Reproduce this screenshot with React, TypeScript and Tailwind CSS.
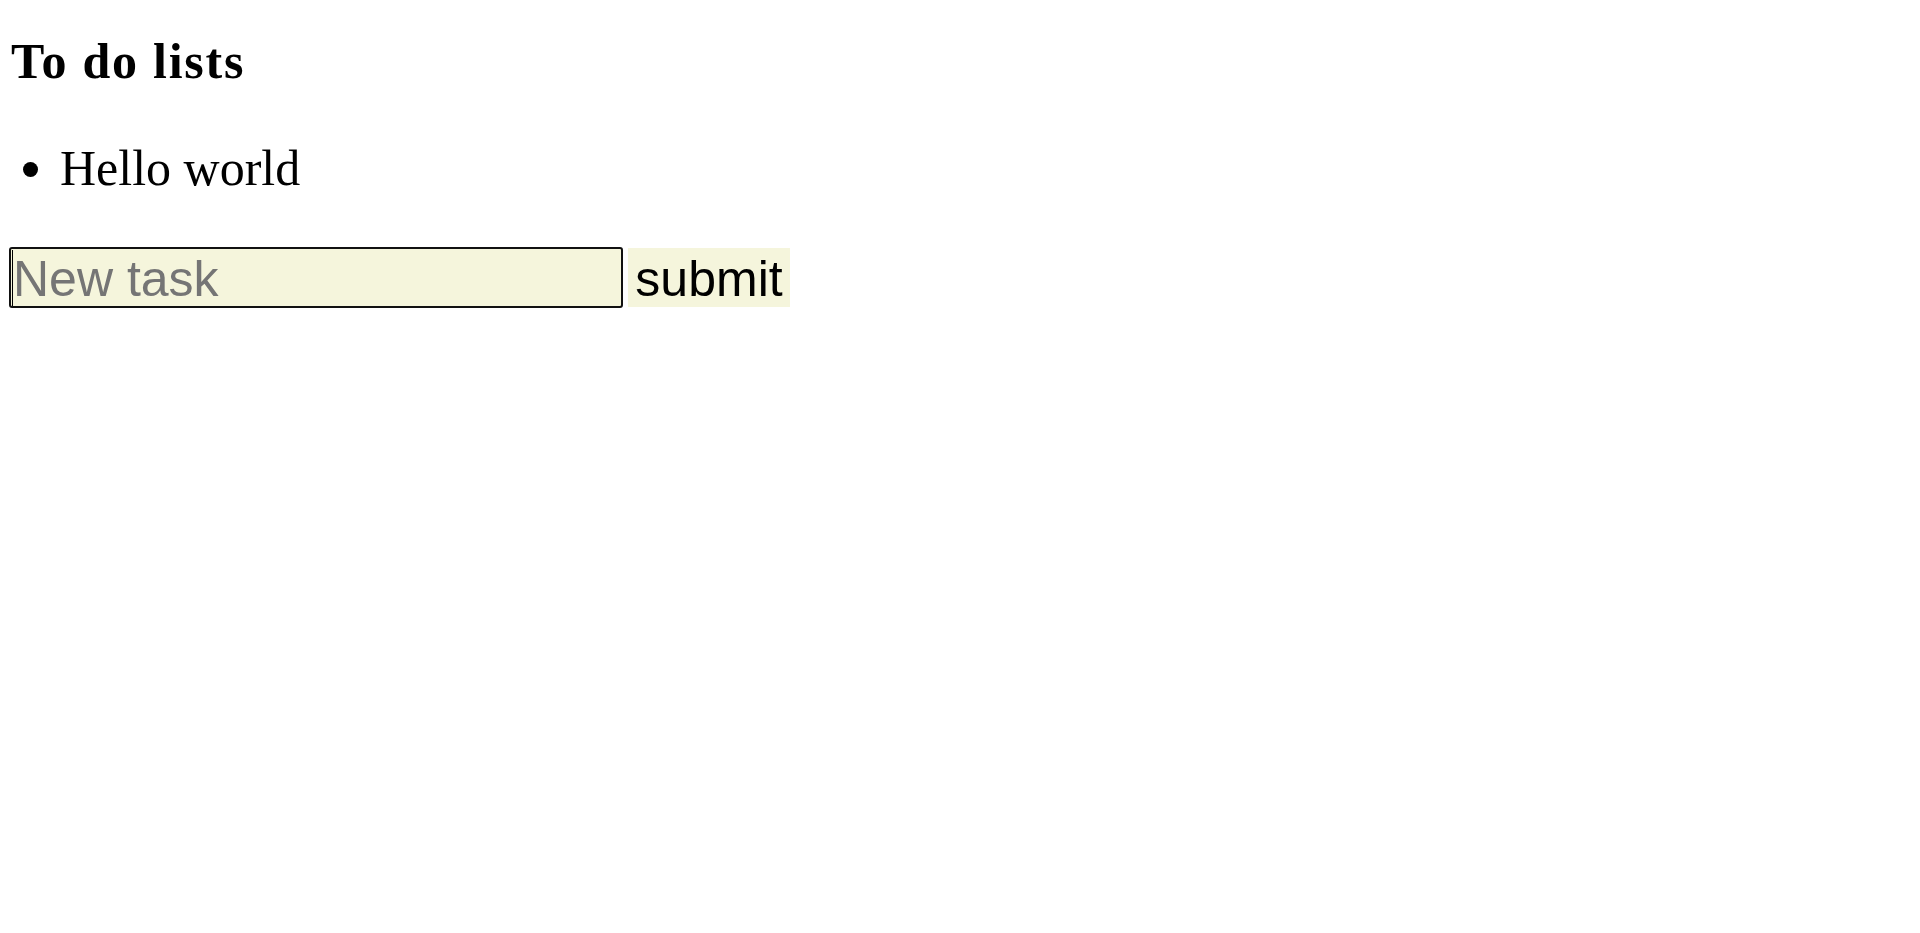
const App = () => {
    return (
        <div className="min-h-screen bg-white pl-[9px] pt-[34px] font-['Liberation_Serif',serif] text-black">
            <h1 className="ml-[2px] text-[50px] leading-[55px] font-bold tracking-[1.75px]">To do lists</h1>
            <ul className="mt-[52px]">
                <li className="flex h-[55px] items-center text-[50px] leading-[55px]">
                    <span className="ml-[14px] inline-block h-[15px] w-[15px] translate-y-[1px] rounded-full bg-black" />
                    <span className="ml-[22px]">Hello world</span>
                </li>
            </ul>
            {/* new task form */}
            <form className="mt-[51px] flex items-start gap-[5px] font-['Liberation_Sans',Arial,sans-serif]" onSubmit={(e) => e.preventDefault()}>
                <div className="relative">
                    <input
                        type="text"
                        placeholder="New task"
                        className="h-[61px] w-[614px] rounded-[3px] border-2 border-[#111] bg-[#f5f5dc] px-[2px] pt-[3px] text-[50px] text-black outline-none placeholder:text-[#757575]"
                    />
                    <span className="absolute left-[3px] top-[3px] h-[56px] w-[1px] bg-black" />
                </div>
                <button type="submit" className="mt-[1px] flex h-[59px] w-[162px] items-center justify-center bg-[#f5f5dc] pt-[2px] text-[50px] leading-none text-black">
                    submit
                </button>
            </form>
        </div>
    );
};

export default App;
